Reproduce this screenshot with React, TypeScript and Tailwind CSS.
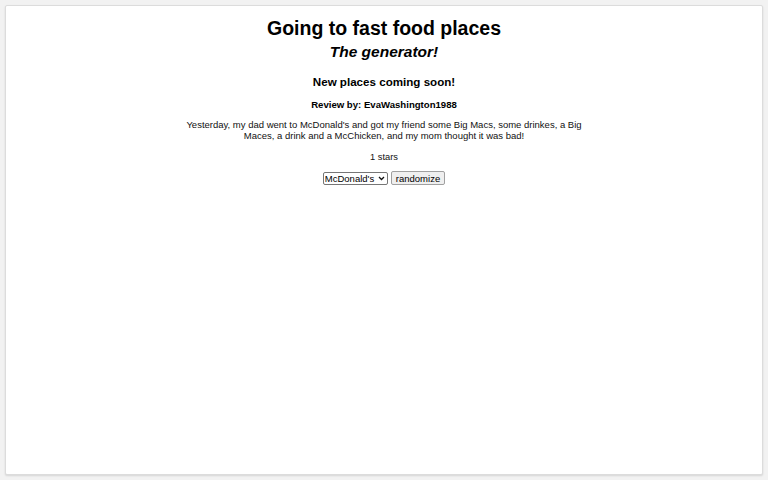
export default function App() {
  return (
    <div className="h-[480px] w-full bg-[#f2f2f2] p-[5px] font-['Liberation_Sans',Arial,sans-serif] text-black">
      <div className="flex h-full flex-col items-center rounded-[2px] border border-[#dcdcdc] bg-white pt-[10px] shadow-[0_1px_2px_rgba(0,0,0,0.12)]">
        <h1 className="text-[19.5px] font-bold leading-[24px]">Going to fast food places</h1>
        <h2 className="mt-[2px] text-[15.5px] font-bold italic leading-[20px]">The generator!</h2>
        <h3 className="mt-[12px] text-[11.6px] font-bold leading-[16px]">New places coming soon!</h3>
        <p className="mt-[9px] text-[9.6px] font-bold leading-[12px]">Review by: EvaWashington1988</p>
        <p className="mt-[9px] max-w-[400px] text-center text-[9.5px] leading-[10.5px] text-[#111]">
          Yesterday, my dad went to McDonald's and got my friend some Big Macs, some drinkes, a Big Maces, a drink and a
          McChicken, and my mom thought it was bad!
        </p>
        <p className="mt-[10px] text-[9.3px] leading-[12px] text-[#111]">1 stars</p>
        <div className="mt-[8px] flex items-center gap-[3px]">
          <div className="relative flex">
            <select
              className="block h-[13px] appearance-none rounded-[2px] border border-[#767676] bg-white py-0 pl-[1px] pr-[11px] text-[9.5px] leading-[11px]"
              defaultValue="mcd"
            >
              <option value="mcd">McDonald's</option>
              <option value="bk">Burger King</option>
              <option value="wendys">Wendy's</option>
            </select>
            <svg
              className="pointer-events-none absolute right-[3px] top-[4px]"
              width="7"
              height="5"
              viewBox="0 0 7 5"
              fill="none"
              stroke="#111"
              strokeWidth="1.3"
            >
              <path d="M1 1l2.5 2.5L6 1" />
            </svg>
          </div>
          <button className="block h-[14px] rounded-[2px] border border-[#a0a0a0] bg-[#efefef] px-[4px] py-0 text-[9.5px] leading-[11px]">
            randomize
          </button>
        </div>
      </div>
    </div>
  );
}
